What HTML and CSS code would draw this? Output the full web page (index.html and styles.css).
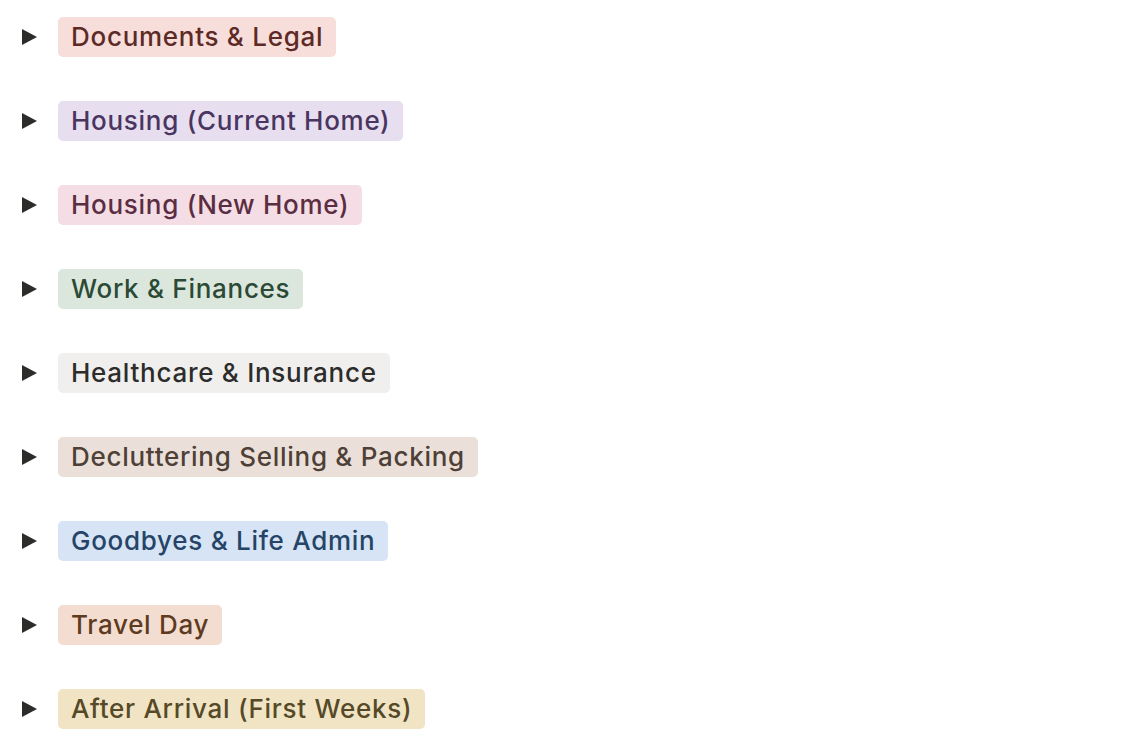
FILE: index.html
```html
<!DOCTYPE html>
<html>
<head>
<meta charset="utf-8">
<link rel="stylesheet" href="styles.css">
</head>
<body>
<ul class="toggles">
  <li class="row"><span class="caret"></span><span class="tag red">Documents &amp; Legal</span></li>
  <li class="row"><span class="caret"></span><span class="tag purple">Housing (Current Home)</span></li>
  <li class="row"><span class="caret"></span><span class="tag pink">Housing (New Home)</span></li>
  <li class="row"><span class="caret"></span><span class="tag green">Work &amp; Finances</span></li>
  <li class="row"><span class="caret"></span><span class="tag gray">Healthcare &amp; Insurance</span></li>
  <li class="row"><span class="caret"></span><span class="tag brown">Decluttering Selling &amp; Packing</span></li>
  <li class="row"><span class="caret"></span><span class="tag blue">Goodbyes &amp; Life Admin</span></li>
  <li class="row"><span class="caret"></span><span class="tag orange">Travel Day</span></li>
  <li class="row"><span class="caret"></span><span class="tag yellow">After Arrival (First Weeks)</span></li>
</ul>
</body>
</html>
```
FILE: styles.css
```css
html, body {
  margin: 0;
  background: #ffffff;
}
body {
  font-family: Inter, "Liberation Sans", Arial, sans-serif;
}
.toggles {
  list-style: none;
  margin: 0;
  padding: 17px 0 0 22px;
  display: flex;
  flex-direction: column;
  gap: 44px;
}
.row {
  display: flex;
  align-items: center;
  height: 40px;
}
.caret {
  width: 0;
  height: 0;
  border-top: 8px solid transparent;
  border-bottom: 8px solid transparent;
  border-left: 15px solid #2c2c2b;
  margin-right: 21px;
}
.tag {
  display: inline-flex;
  align-items: center;
  height: 40px;
  padding: 0 13px;
  border-radius: 5px;
  font-size: 26px;
  font-weight: 500;
  letter-spacing: 0.72px;
  line-height: 40px;
  white-space: nowrap;
}
.red { background: #f7dedb; color: #5d2a26; }
.purple { background: #e7def0; color: #4a3560; }
.pink { background: #f5dde5; color: #5a2d42; }
.green { background: #dbe7dd; color: #2b4a35; }
.gray { background: #f0efed; color: #2c2c2b; }
.brown { background: #ebe0d9; color: #4e4036; }
.blue { background: #d6e4f5; color: #264467; }
.orange { background: #f3ddd1; color: #5e3b1f; }
.yellow { background: #f0e4c4; color: #564927; }
```
